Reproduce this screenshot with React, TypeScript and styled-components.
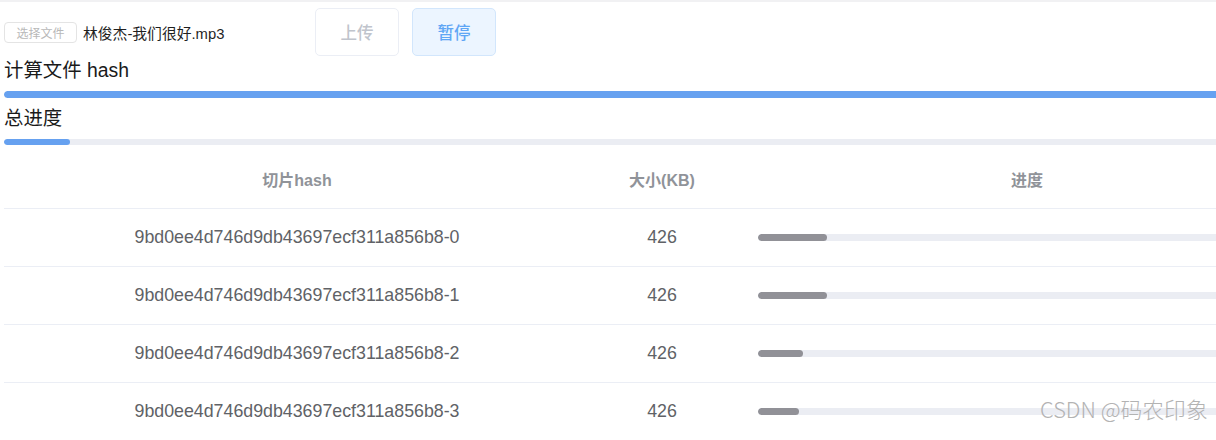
import React from "react";
import styled, { createGlobalStyle } from "styled-components";

const Global = createGlobalStyle`
  html, body { margin: 0; padding: 0; background: #fff; overflow: hidden; }
  body { font-family: "Liberation Sans", "Noto Sans CJK SC", sans-serif; }
`;

const Frame = styled.div`
  position: relative;
  width: 100vw;
  height: 440px;
  overflow: hidden;
`;

const Page = styled.div`
  width: 1320px;
  height: 440px;
  border-top: 2px solid #f1f1f3;
  padding-left: 4px;
  box-sizing: border-box;
`;

const Toolbar = styled.div`
  display: flex;
  align-items: center;
  height: 48px;
  margin-top: 6px;
`;

const FilePicker = styled.div`
  display: flex;
  align-items: center;
  width: 311px;
`;

const ChooseButton = styled.span`
  display: inline-flex;
  align-items: center;
  justify-content: center;
  width: 73px;
  height: 21px;
  box-sizing: border-box;
  border: 1px solid #e4e4e4;
  border-radius: 4px;
  font-size: 12px;
  color: #b8b8b8;
`;

const FileName = styled.span`
  margin-left: 6px;
  font-size: 14.8px;
  color: #1f1f1f;
`;

const Button = styled.button<{ $variant: "disabled" | "primary" }>`
  width: 84px;
  height: 48px;
  box-sizing: border-box;
  border-radius: 5px;
  font-family: "Liberation Sans", "Noto Sans CJK SC", sans-serif;
  font-size: 16.5px;
  font-weight: 500;
  margin-right: 13px;
  border: 1px solid ${(p) => (p.$variant === "primary" ? "#d2e6fc" : "#ebeef5")};
  background: ${(p) => (p.$variant === "primary" ? "#ecf5ff" : "#fff")};
  color: ${(p) => (p.$variant === "primary" ? "#5fa6f5" : "#c0c4cc")};
  padding: 0;
`;

const Title = styled.div<{ $gap: number }>`
  margin-top: ${(p) => p.$gap}px;
  font-size: 19.4px;
  line-height: 28px;
  color: #1a1a1a;
`;

const Track = styled.div<{ $h: number; $bg: string }>`
  height: ${(p) => p.$h}px;
  margin-top: 7px;
  background: ${(p) => p.$bg};
  border-radius: ${(p) => p.$h / 2}px;
  overflow: hidden;
`;

const Fill = styled.div<{ $color: string }>`
  height: 100%;
  background: ${(p) => p.$color};
  border-radius: inherit;
`;

const Table = styled.table`
  margin-top: 5px;
  width: 1316px;
  border-collapse: collapse;
  table-layout: fixed;
`;

const Th = styled.th`
  height: 58px;
  padding: 0;
  font-size: 16px;
  font-weight: 700;
  color: #909399;
  text-align: center;
  border-bottom: 1px solid #ebeef5;
`;

const Td = styled.td`
  height: 57px;
  padding: 0;
  font-size: 17.8px;
  color: #606266;
  text-align: center;
  border-bottom: 1px solid #ebeef5;
`;

const ProgressTd = styled(Td)`
  padding: 0 24px;
`;

const CellTrack = styled.div`
  height: 7px;
  background: #ebedf3;
  border-radius: 4px;
  overflow: hidden;
`;

const Watermark = styled.div`
  position: absolute;
  left: 1040px;
  top: 394px;
  font-family: "Noto Sans CJK SC", sans-serif;
  font-weight: 300;
  font-size: 21.8px;
  line-height: 30px;
  color: #b3b3b3;
`;

const chunks = [
  { hash: "9bd0ee4d746d9db43697ecf311a856b8-0", size: 426, pct: 12.9 },
  { hash: "9bd0ee4d746d9db43697ecf311a856b8-1", size: 426, pct: 12.9 },
  { hash: "9bd0ee4d746d9db43697ecf311a856b8-2", size: 426, pct: 8.3 },
  { hash: "9bd0ee4d746d9db43697ecf311a856b8-3", size: 426, pct: 7.7 },
];

export default function App() {
  return (
    <>
      <Global />
      <Frame>
        <Page>
          <Toolbar>
            <FilePicker>
              <ChooseButton>选择文件</ChooseButton>
              <FileName>林俊杰-我们很好.mp3</FileName>
            </FilePicker>
            <Button $variant="disabled">上传</Button>
            <Button $variant="primary">暂停</Button>
          </Toolbar>
          <Title $gap={0}>计算文件 hash</Title>
          <Track $h={7} $bg="#ebeef5">
            <Fill $color="#66a1f0" style={{ width: "100%" }} />
          </Track>
          <Title $gap={6}>总进度</Title>
          <Track $h={6} $bg="#ebedf3">
            <Fill $color="#66a1f0" style={{ width: "5%" }} />
          </Track>
          <Table>
            <colgroup>
              <col style={{ width: 586 }} />
              <col style={{ width: 144 }} />
              <col style={{ width: 586 }} />
            </colgroup>
            <thead>
              <tr>
                <Th>切片hash</Th>
                <Th>大小(KB)</Th>
                <Th>进度</Th>
              </tr>
            </thead>
            <tbody>
              {chunks.map((c) => (
                <tr key={c.hash}>
                  <Td>{c.hash}</Td>
                  <Td>{c.size}</Td>
                  <ProgressTd>
                    <CellTrack>
                      <Fill $color="#919197" style={{ width: `${c.pct}%` }} />
                    </CellTrack>
                  </ProgressTd>
                </tr>
              ))}
            </tbody>
          </Table>
        </Page>
        <Watermark>CSDN @码农印象</Watermark>
      </Frame>
    </>
  );
}
